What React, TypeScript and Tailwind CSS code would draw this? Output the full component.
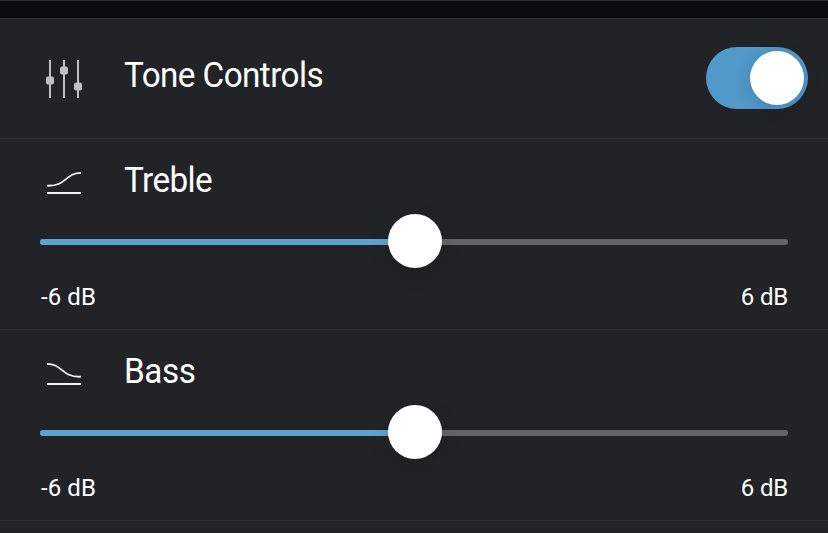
import { useState } from "react";
import * as Slider from "@radix-ui/react-slider";
import * as Switch from "@radix-ui/react-switch";

const bands = [
  {
    label: "Treble",
    curve: "M47 185.7C67 186.5 65 172.9 81 172.9",
    labelClass: "tracking-[-0.6px]",
  },
  {
    label: "Bass",
    curve: "M47 172.9C63 172.9 61 186.5 81 185.7",
    labelClass: "tracking-[-0.4px]",
  },
] as const;

function SlidersIcon() {
  return (
    <svg className="h-10 w-10" viewBox="0 0 40 40" fill="#bfc0c2">
      <rect x="7" y="1" width="2" height="38" />
      <rect x="21" y="1" width="2" height="38" />
      <rect x="35" y="1" width="2" height="38" />
      <rect x="4" y="17.5" width="8" height="8" rx="2" />
      <rect x="18" y="7.5" width="8" height="8" rx="2" />
      <rect x="32" y="23.5" width="8" height="8" rx="2" />
    </svg>
  );
}

function CurveIcon({ path }: { path: string }) {
  return (
    <svg className="h-6 w-[34px]" viewBox="47 171 34 24" fill="none" stroke="#f0f3f3" strokeWidth="1.8">
      <path d={path} />
      <path d="M47 193H81" strokeWidth="2" />
    </svg>
  );
}

function ToneSlider({ label, curve, labelClass }: (typeof bands)[number]) {
  const [value, setValue] = useState([0]);

  return (
    <section className="h-[191px] border-b border-[#2d2e31] px-10">
      <div className="flex h-[75px] pt-[21px]">
        <div className="w-[84px] pt-[11px] pl-[7px]">
          <CurveIcon path={curve} />
        </div>
        <h2 className={`origin-left scale-x-95 text-[35px] leading-[42px] ${labelClass}`}>{label}</h2>
      </div>
      <Slider.Root
        className="relative flex h-[54px] w-full items-center"
        min={-6}
        max={6}
        step={0.5}
        value={value}
        onValueChange={setValue}
      >
        <Slider.Track className="relative mt-0.5 h-1.5 grow overflow-hidden rounded-full bg-[#636467]">
          <Slider.Range className="absolute h-full bg-[#5ba4cf]" />
        </Slider.Track>
        <Slider.Thumb
          aria-label={label}
          className="relative left-px block size-[54px] rounded-full bg-white shadow-[0_6px_20px_rgba(0,0,0,0.12)] outline-none"
        />
      </Slider.Root>
      <div className="flex justify-between pt-[15px] text-2xl leading-7">
        <span className="pl-px tracking-[0.1px]">-6 dB</span>
        <span className="tracking-[-0.2px]">6 dB</span>
      </div>
    </section>
  );
}

export default function App() {
  const [enabled, setEnabled] = useState(true);

  return (
    <main className="h-[533px] w-[828px] overflow-hidden bg-[#222327] font-['Roboto',sans-serif] text-white">
      <div className="h-[19px] border-y border-t-[#2a2d32] border-b-[#2d2e31] bg-[#090d12]" />
      <header className="flex h-[120px] border-b border-[#2d2e31] pr-5 pl-[42px]">
        <div className="w-[82px] pt-10">
          <SlidersIcon />
        </div>
        <h1 className="mr-auto origin-left scale-x-95 pt-9 text-[35px] leading-[42px] tracking-[-0.6px]">
          Tone Controls
        </h1>
        <Switch.Root
          aria-label="Tone Controls"
          checked={enabled}
          onCheckedChange={setEnabled}
          className="mt-7 h-[62px] w-[102px] rounded-full bg-[#5199c9] p-1 outline-none"
        >
          <Switch.Thumb className="block size-[54px] rounded-full bg-white shadow-[0_4px_16px_rgba(0,0,0,0.15)] data-[state=checked]:translate-x-10" />
        </Switch.Root>
      </header>
      {bands.map((band) => (
        <ToneSlider key={band.label} {...band} />
      ))}
    </main>
  );
}
